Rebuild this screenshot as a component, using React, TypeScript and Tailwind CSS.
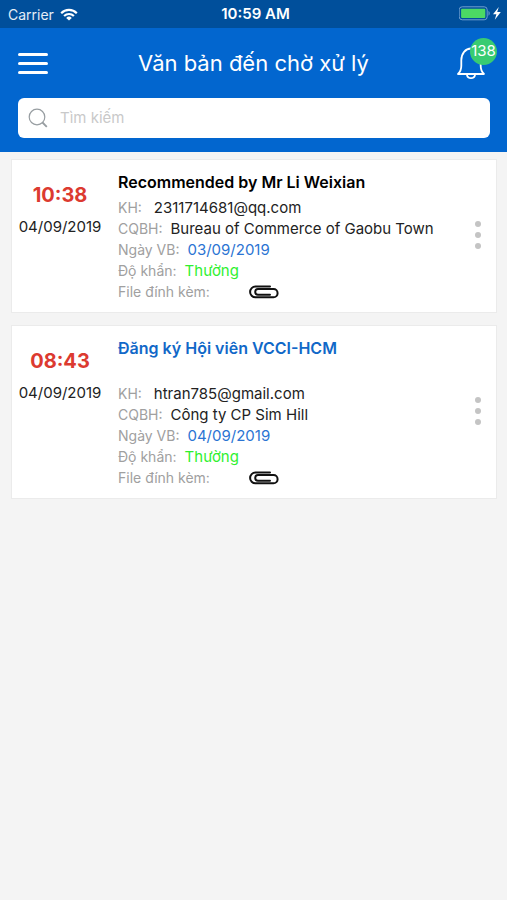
type Doc = {
  time: string;
  date: string;
  title: string;
  unread: boolean;
  sender: string;
  agency: string;
  issued: string;
  urgency: string;
};

const docs: Doc[] = [
  {
    time: "10:38",
    date: "04/09/2019",
    title: "Recommended by Mr Li Weixian",
    unread: false,
    sender: "2311714681@qq.com",
    agency: "Bureau of Commerce of Gaobu Town",
    issued: "03/09/2019",
    urgency: "Thường",
  },
  {
    time: "08:43",
    date: "04/09/2019",
    title: "Đăng ký Hội viên VCCI-HCM",
    unread: true,
    sender: "htran785@gmail.com",
    agency: "Công ty CP Sim Hill",
    issued: "04/09/2019",
    urgency: "Thường",
  },
];

function Wifi() {
  return (
    <svg viewBox="0 0 18 13" className="h-[13px] w-[18px]" fill="none" stroke="#fff" strokeWidth="2.2" aria-hidden="true">
      <path d="M1.2 5.2a11 11 0 0 1 15.6 0" />
      <path d="M4.1 8a7 7 0 0 1 9.8 0" />
      <path d="M9 12.6 6.2 9.9a4 4 0 0 1 5.6 0z" fill="#fff" stroke="none" />
    </svg>
  );
}

function Battery() {
  return (
    <svg viewBox="0 0 44 16" className="h-4 w-11" aria-hidden="true">
      <rect x="0.2" y="0.8" width="28" height="13" rx="3" fill="none" stroke="#6f9fd0" />
      <rect x="2.1" y="2.700" width="24.2" height="9.2" rx="1" fill="#4cd964" />
      <path d="M29.500 5.100c1.6.6 1.6 4 0 4.600z" fill="#6f9fd0" />
      <path d="M39.800 1 34 8.300h3.400l-1.600 5.400 6-7.600h-3.600z" fill="#fff" />
    </svg>
  );
}

function Bell() {
  return (
    <svg viewBox="0 0 30 34" className="h-[34px] w-[30px]" fill="none" stroke="#fff" strokeWidth="1.8" strokeLinejoin="round" aria-hidden="true">
      <path d="M2 28c2.300-2 3.300-4.700 3.300-8.200v-5.500C5.300 7.500 9.500 2.500 15 2.500s9.700 5 9.700 11.800v5.500c0 3.500 1 6.200 3.300 8.200z" />
      <path d="M10.800 28.300c.5 2.700 2 3.900 4.200 3.900s3.700-1.200 4.200-3.900" />
    </svg>
  );
}

function Clip() {
  return (
    <svg viewBox="0 0 30 14" className="h-[14px] w-[30px]" fill="none" stroke="#111" strokeWidth="2" strokeLinecap="round" role="img" aria-label="File">
      <path d="M21 1.500H6.500a5.400 5.400 0 0 0 0 10.800h18a4.100 4.100 0 0 0 0-8.200H9a2.800 2.800 0 0 0 0 5.600h12" />
    </svg>
  );
}

function Card({ doc }: { doc: Doc }) {
  return (
    <article className="flex border border-[#ebebeb] bg-white pb-2.5 pt-3">
      <div className="w-[96px] shrink-0 pt-[9px] text-center">
        <div className="text-[20px] font-bold leading-7 text-[#dc3a30]">{doc.time}</div>
        <div className="mt-1 text-[15px] leading-7 text-[#222]">{doc.date}</div>
      </div>
      <div className="min-w-0 flex-1 pl-2.5 text-[14px] leading-[21px] text-[#a0a0a0]">
        <h2 className={doc.unread ? "mb-6 text-[16px] font-semibold leading-[21px] text-[#1168c8]" : "mb-1 text-[16px] font-semibold leading-[21px] text-black"}>
          {doc.title}
        </h2>
        <dl>
          <div className="flex">
            <dt>KH:</dt>
            <dd className="ml-3 text-[15px] text-[#222]">{doc.sender}</dd>
          </div>
          <div className="flex">
            <dt>CQBH:</dt>
            <dd className="ml-2 text-[15px] text-[#222]">{doc.agency}</dd>
          </div>
          <div className="flex">
            <dt>Ngày VB:</dt>
            <dd className="ml-2 text-[15px] text-[#2b74d3]">{doc.issued}</dd>
          </div>
          <div className="flex">
            <dt>Độ khẩn:</dt>
            <dd className="ml-2 text-[15px] text-[#2ff02f]">{doc.urgency}</dd>
          </div>
          <div className="flex">
            <dt className="w-[131px]">File đính kèm:</dt>
            <dd className="flex items-center">
              <Clip />
            </dd>
          </div>
        </dl>
      </div>
      <button type="button" aria-label="Menu" className="mr-[15px] flex flex-col items-center justify-center gap-[5px] pb-1">
        <span className="size-1.5 rounded-full bg-[#c4c4c4]" />
        <span className="size-1.5 rounded-full bg-[#c4c4c4]" />
        <span className="size-1.5 rounded-full bg-[#c4c4c4]" />
      </button>
    </article>
  );
}

export default function App() {
  return (
    <div className="min-h-screen bg-[#f4f4f4] font-['Inter','Noto_Sans',sans-serif]">
      <div className="grid h-7 grid-cols-3 items-center bg-[#004f9b] px-1 text-[14px] text-white">
        <div className="flex items-center gap-1.5 pl-1 text-[#e3edf7]">
          Carrier
          <Wifi />
        </div>
        <div className="pl-1 text-center text-[15px] font-semibold">10:59 AM</div>
        <div className="flex justify-end">
          <Battery />
        </div>
      </div>
      <header className="bg-[#0266cf] px-[17px] pb-[14px] pt-2">
        <div className="flex h-[54px] items-center">
          <button type="button" aria-label="Menu" className="ml-px mr-[3px] flex w-[30px] flex-col gap-1.5">
            <span className="h-[3px] rounded-full bg-white" />
            <span className="h-[3px] rounded-full bg-white" />
            <span className="h-[3px] rounded-full bg-white" />
          </button>
          <h1 className="flex-1 text-center text-[22px] leading-8 text-white">Văn bản đến chờ xử lý</h1>
          <button type="button" aria-label="138" className="relative mr-1">
            <Bell />
            <span className="absolute -right-[11px] -top-2 flex size-[27px] items-center justify-center rounded-full bg-[#38cb72] text-[15px] text-white">
              138
            </span>
          </button>
        </div>
        <label className="ml-px mt-2 flex h-10 items-center gap-3 rounded-md bg-white pl-2.5 pr-3">
          <svg viewBox="0 0 20 20" className="size-5 shrink-0" fill="none" stroke="#979da1" strokeWidth="1.200" aria-hidden="true">
            <circle cx="9" cy="9" r="7.800" />
            <path d="m14.500 14.500 4.300 4.300" strokeWidth="1.800" />
          </svg>
          <input type="search" aria-label="Tìm kiếm" placeholder="Tìm kiếm" className="min-w-0 flex-1 text-[15px] outline-none placeholder:text-[#c9c9c9]" />
        </label>
      </header>
      <main className="flex flex-col gap-3 py-[7px] pl-[11px] pr-2.5">
        {docs.map((doc) => (
          <Card key={doc.time} doc={doc} />
        ))}
      </main>
    </div>
  );
}
